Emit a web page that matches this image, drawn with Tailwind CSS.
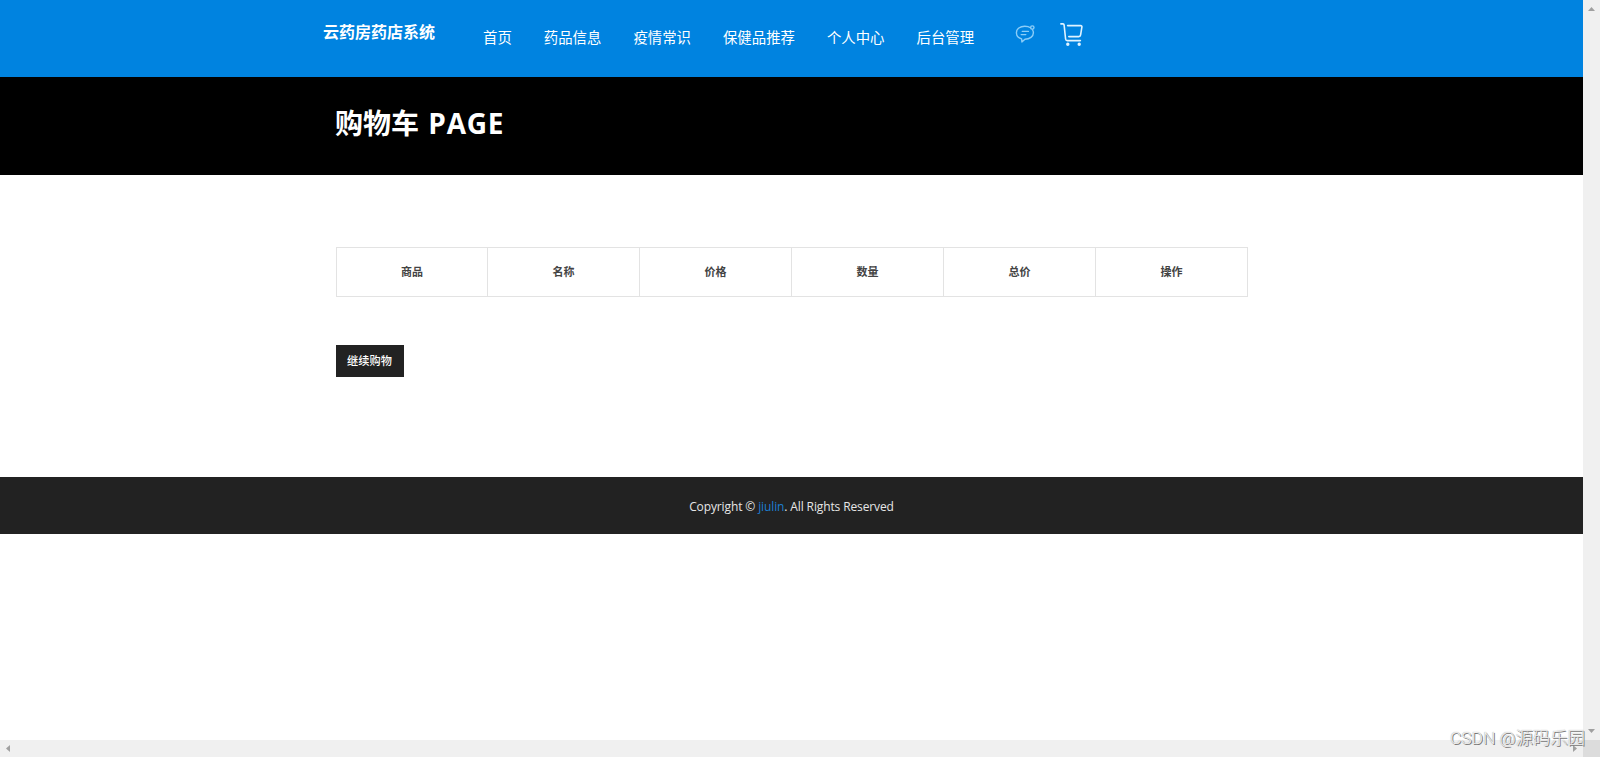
<!DOCTYPE html>
<html lang="zh-CN">

<head>
    <meta charset="UTF-8">
    <meta name="viewport" content="width=device-width, initial-scale=1.0">
    <title>购物车</title>
    <script src="https://cdn.jsdelivr.net/npm/@tailwindcss/browser@4"></script>
</head>

<body class="h-screen overflow-hidden bg-white font-['Open_Sans','Noto_Sans_CJK_SC',sans-serif]">

    <div class="grid h-full grid-cols-[1fr_17px] grid-rows-[1fr_17px]">

        <div class="overflow-hidden">
            <!-- 导航 -->
            <header class="flex h-[77px] bg-[#0083e0] pl-[323px] text-white">
                <a class="mt-5 w-40 text-[16px] leading-6 font-bold whitespace-nowrap">云药房药店系统</a>
                <nav class="mt-[26px] flex gap-8 text-[14.4px] leading-6 whitespace-nowrap">
                    <a>首页</a>
                    <a>药品信息</a>
                    <a>疫情常识</a>
                    <a>保健品推荐</a>
                    <a>个人中心</a>
                    <a>后台管理</a>
                </nav>
                <svg class="mt-6 ml-[41px] h-5 w-5 shrink-0" viewBox="0 0 20 20" fill="none" stroke="#8bcdf8" stroke-width="1.4" stroke-linecap="round" stroke-linejoin="round">
                    <path d="M15.5 3.8C13.9 2.6 12 2.2 9.8 2.2C5 2.2 1.4 5 1.4 8.7C1.4 11.6 3.4 13.9 6.6 14.8L6.9 18L9.9 15.3C14.8 15.2 18.4 12.4 18.4 8.8C18.4 7.8 18.1 6.8 17.6 6" />
                    <circle cx="17.3" cy="3.6" r="1.7" />
                    <path d="M7.3 7.4H13.4M6.2 10.6H10.8" />
                </svg>
                <svg class="mt-[22px] ml-[25px] h-6 w-6 shrink-0" viewBox="0 0 24 24" fill="none" stroke="#e0f3ff" stroke-width="1.6" stroke-linecap="round" stroke-linejoin="round">
                    <path d="M0.9 1.9H3Q3.9 1.9 4.1 3L5.6 17Q5.8 18.6 7.2 18.6H20.4M7.6 3.6H20.6Q22.1 3.6 21.9 5L20.6 12.9Q20.4 14.6 18.8 14.6H8.8" />
                    <circle cx="7.8" cy="22.2" r="0.9" fill="#e0f3ff" />
                    <circle cx="19.2" cy="22.2" r="0.9" fill="#e0f3ff" />
                </svg>
            </header>

            <!-- 标题 -->
            <div class="h-[98px] bg-black pt-[26px] pl-[335px]">
                <h1 class="text-[28px] leading-10 font-bold text-white">购物车 <span class="ml-0.5 inline-block tracking-[0.8px]">PAGE</span></h1>
            </div>

            <!-- 购物车 -->
            <main class="h-[302px] pt-[72px] pl-[336px]">
                <div class="grid h-[50px] w-[912px] grid-cols-[151px_repeat(5,152px)] border border-r-0 border-[#e3e3e3] text-center text-[11px] leading-[48px] font-bold text-[#444]">
                    <div class="border-r border-[#e3e3e3]">商品</div>
                    <div class="border-r border-[#e3e3e3]">名称</div>
                    <div class="border-r border-[#e3e3e3]">价格</div>
                    <div class="border-r border-[#e3e3e3]">数量</div>
                    <div class="border-r border-[#e3e3e3]">总价</div>
                    <div class="border-r border-[#e3e3e3]">操作</div>
                </div>
                <button class="mt-12 block h-8 w-[68px] bg-[#222] pr-px text-[11.2px] font-medium whitespace-nowrap text-white">继续购物</button>
            </main>

            <footer class="flex h-[57px] items-center justify-center bg-[#222] pt-[3px] text-[12px] tracking-[-0.12px] text-[#e6e6e6]">
                <p>Copyright © <a class="text-[#1c7fd0]">jiulin</a>. All Rights Reserved</p>
            </footer>
        </div>

        <!-- 滚动条 -->
        <div class="flex flex-col items-center justify-between bg-[#f0f0f0] py-[7px]">
            <svg class="h-1 w-[7px]" viewBox="0 0 7 4" fill="#a0a0a0"><path d="M0 4L3.5 0L7 4Z" /></svg>
            <svg class="h-1 w-[7px]" viewBox="0 0 7 4" fill="#a0a0a0"><path d="M0 0L3.5 4L7 0Z" /></svg>
        </div>
        <div class="flex items-center justify-between bg-[#f0f0f0] px-1.5">
            <svg class="h-[7px] w-1" viewBox="0 0 4 7" fill="#a0a0a0"><path d="M4 0L0 3.5L4 7Z" /></svg>
            <svg class="h-[7px] w-1" viewBox="0 0 4 7" fill="#a0a0a0"><path d="M0 0L4 3.5L0 7Z" /></svg>
        </div>
        <div class="bg-[#dcdcdc]"></div>
    </div>

    <!-- 水印 -->
    <div class="absolute right-[15px] bottom-[7px] font-['Roboto','Noto_Sans_CJK_SC',sans-serif] text-[17.4px] leading-6 font-light whitespace-nowrap text-[#f0f0f0] [text-shadow:1px_1px_0_#777,0_0_1px_#999]">CSDN @源码乐园</div>

</body>

</html>
